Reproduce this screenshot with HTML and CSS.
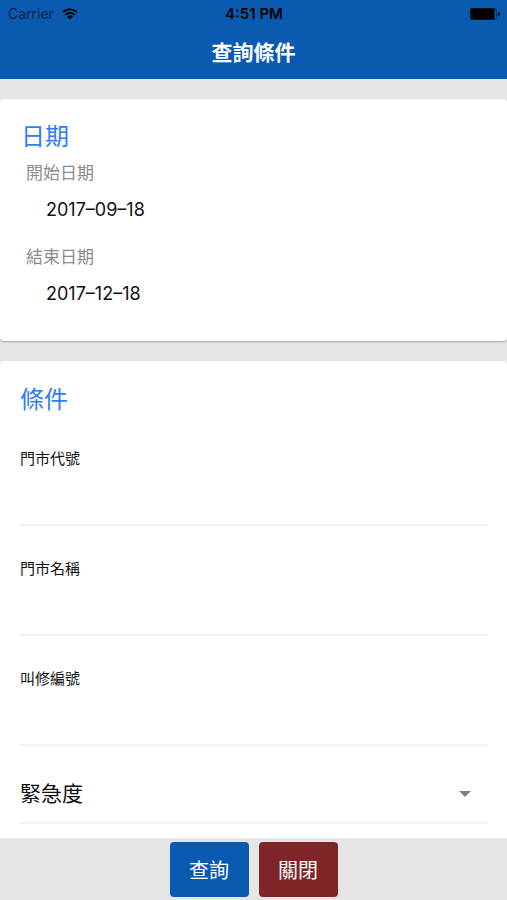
FILE: index.html
```html
<!DOCTYPE html>
<html lang="zh-Hant">
<head>
<meta charset="utf-8">
<meta name="viewport" content="width=device-width, initial-scale=1">
<title>查詢條件</title>
<link rel="stylesheet" href="styles.css">
</head>
<body>
<header class="header">
  <div class="status">
    <div class="carrier">
      <span>Carrier</span>
      <svg class="wifi" viewBox="0 0 16 12" aria-hidden="true">
        <path d="M1 4.300a10 10 0 0 1 14 0M3.500 6.800a6.400 6.400 0 0 1 9 0" fill="none" stroke="currentColor" stroke-width="1.700"/>
        <path d="M5.200 8.700a4 4 0 0 1 5.600 0L8 11.500z" fill="currentColor"/>
      </svg>
    </div>
    <div class="clock">4:51 PM</div>
    <div class="power">
      <svg class="battery" viewBox="0 0 30 12" aria-hidden="true">
        <rect x="0.500" y="0.500" width="26" height="11" rx="2" fill="none" stroke="currentColor" stroke-opacity="0.500"/>
        <rect x="0.500" y="0.500" width="24" height="11" rx="1" fill="currentColor"/>
        <path d="M28 4q2 .5 2 2t-2 2z" fill="currentColor"/>
      </svg>
    </div>
  </div>
  <h1 class="title">查詢條件</h1>
</header>

<main class="content">
  <section class="card dates">
    <h2 class="heading">日期</h2>
    <div class="date-field">
      <label for="start">開始日期</label>
      <input id="start" type="text" value="2017–09–18">
    </div>
    <div class="date-field">
      <label for="end">結束日期</label>
      <input id="end" type="text" value="2017–12–18">
    </div>
  </section>

  <section class="card conditions">
    <h2 class="heading">條件</h2>
    <div class="field">
      <label for="store-code">門市代號</label>
      <input id="store-code" type="text">
    </div>
    <div class="field">
      <label for="store-name">門市名稱</label>
      <input id="store-name" type="text">
    </div>
    <div class="field">
      <label for="repair-no">叫修編號</label>
      <input id="repair-no" type="text">
    </div>
    <div class="select-field">
      <label for="urgency">緊急度</label>
      <select id="urgency"><option value=""></option></select>
      <svg class="arrow" viewBox="0 0 12 6" aria-hidden="true"><path d="M0 0h12L6 6z" fill="currentColor"/></svg>
    </div>
  </section>
</main>

<footer class="footer">
  <button class="button search" type="button">查詢</button>
  <button class="button close" type="button">關閉</button>
</footer>
</body>
</html>
```

FILE: styles.css
```css
* {
  box-sizing: border-box;
}

body {
  margin: 0;
  height: 100vh;
  display: flex;
  flex-direction: column;
  background: #e6e6e6;
  color: #111;
  font-family: Inter, "Noto Sans CJK TC", sans-serif;
}

input,
select,
button {
  font: inherit;
  color: inherit;
  border: 0;
  padding: 0;
  background: none;
}

.header {
  flex: none;
  background: #0b5ab2;
  padding-bottom: 10px;
}

.status {
  display: grid;
  grid-template-columns: 1fr auto 1fr;
  align-items: center;
  height: 28px;
  padding: 0 7px 0 8px;
  color: #000;
  font-size: 14px;
  line-height: 16px;
}

.carrier {
  display: flex;
  align-items: center;
  gap: 8px;
  color: #06203f;
}

.wifi {
  width: 16px;
  height: 12px;
  color: #000;
}

.clock {
  font-size: 15px;
  font-weight: 600;
}

.power {
  display: flex;
  justify-content: flex-end;
}

.battery {
  width: 30px;
  height: 12px;
}

.title {
  margin: 0;
  padding-top: 9px;
  color: #fff;
  font-size: 21px;
  line-height: 32px;
  font-weight: 700;
  text-align: center;
}

.content {
  flex: 1;
  min-height: 0;
  overflow: hidden;
  padding-top: 20px;
}

.card {
  margin-bottom: 20px;
  background: #fff;
  border-radius: 4px;
  box-shadow: 0 1px 2px rgba(0, 0, 0, 0.3);
}

.dates {
  padding: 22px 21px 36px;
}

.conditions {
  padding: 23px 19px 24px 20px;
}

.heading {
  margin: 0;
  color: #2f7cf6;
  font-size: 24px;
  line-height: 32px;
  font-weight: 400;
}

.date-field {
  display: grid;
  gap: 12px;
  padding: 8px 0 0 5px;
}

.date-field + .date-field {
  padding-top: 24px;
}

.date-field label {
  color: #8c8c8c;
  font-size: 17px;
  line-height: 24px;
}

.date-field input {
  width: 100%;
  height: 24px;
  padding-left: 20px;
  font-size: 18px;
}

.field {
  display: grid;
  padding-top: 33px;
  border-bottom: 2px solid #f1f1f1;
}

.field label {
  font-size: 15px;
  line-height: 20px;
}

.field input {
  width: 100%;
  height: 55px;
  font-size: 17px;
}

.select-field {
  display: grid;
  grid-template-columns: auto 1fr auto;
  align-items: center;
  padding: 20px 17px 0 0;
  border-bottom: 2px solid #f1f1f1;
  font-size: 21px;
  line-height: 56px;
}

.select-field select {
  width: 100%;
  height: 56px;
  appearance: none;
}

.arrow {
  width: 12px;
  height: 6px;
  color: #808080;
}

.footer {
  flex: none;
  display: flex;
  justify-content: center;
  gap: 10px;
  padding: 4px 0 3px;
  background: #e6e6e6;
}

.button {
  width: 79px;
  height: 55px;
  border-radius: 4px;
  color: #fff;
  font-size: 20px;
}

.search {
  background: #0b5ab2;
}

.close {
  background: #802527;
}
```
